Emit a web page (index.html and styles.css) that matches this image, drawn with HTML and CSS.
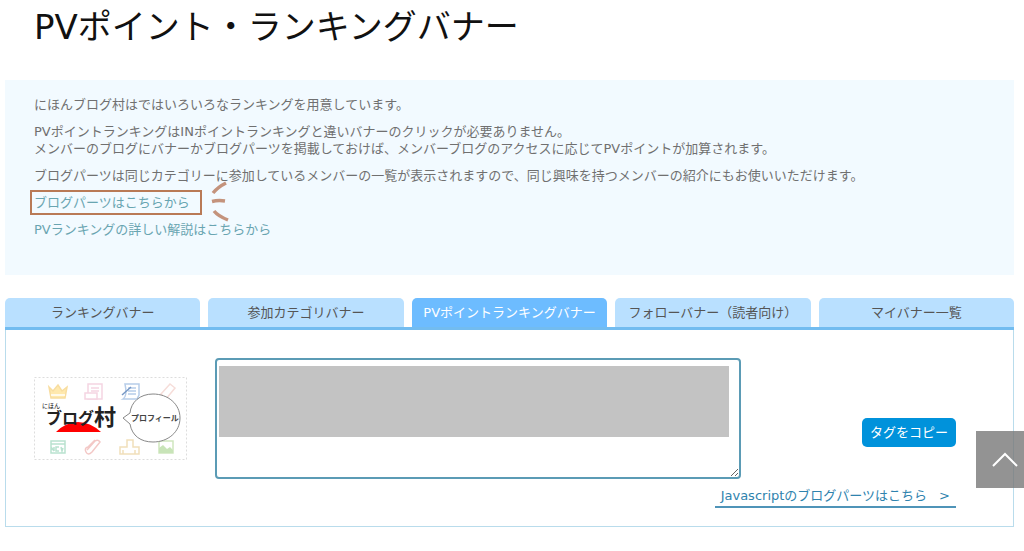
FILE: index.html
```
<!DOCTYPE html>
<html lang="ja">
<head>
    <meta charset="UTF-8">
    <meta name="viewport" content="width=device-width, initial-scale=1.0">
    <title>PVポイント・ランキングバナー</title>
    <link rel="stylesheet" href="styles.css">
</head>
<body>
    <main class="container">
        <h1>PVポイント・ランキングバナー</h1>

        <section class="intro">
            <p>にほんブログ村はではいろいろなランキングを用意しています。</p>
            <p>PVポイントランキングはINポイントランキングと違いバナーのクリックが必要ありません。<br>メンバーのブログにバナーかブログパーツを掲載しておけば、メンバーブログのアクセスに応じてPVポイントが加算されます。</p>
            <p>ブログパーツは同じカテゴリーに参加しているメンバーの一覧が表示されますので、同じ興味を持つメンバーの紹介にもお使いいただけます。</p>
            <p>
                <a class="marked" href="#parts">ブログパーツはこちらから
                    <svg class="rays" width="20" height="42" viewBox="0 0 20 42" fill="none" stroke="#c4937c" stroke-width="3.5" aria-hidden="true">
                        <path d="M3 12 Q8 6 16 2"/>
                        <path d="M2 20.5 Q8 19 15 20"/>
                        <path d="M4 30 Q8 35 18 39"/>
                    </svg>
                </a>
            </p>
            <p><a href="#about">PVランキングの詳しい解説はこちらから</a></p>
        </section>

        <nav class="tabs">
            <a href="#ranking">ランキングバナー</a>
            <a href="#category">参加カテゴリバナー</a>
            <a class="active" href="#pv">PVポイントランキングバナー</a>
            <a href="#follow">フォローバナー（読者向け）</a>
            <a href="#mybanner">マイバナー一覧</a>
        </nav>

        <section class="panel">
            <div class="banner-row">
                <svg class="banner" width="153" height="84" viewBox="0 0 153 84" role="img" aria-label="にほんブログ村 プロフィール">
                    <rect x="0.5" y="0.5" width="152" height="82" fill="#fff" stroke="#ddd" stroke-dasharray="2 2"/>
                    <g fill="none" stroke-width="1.5">
                        <path d="M15 10l4 4 5-6 4 6 5-4-2 11H17z" fill="#ffe9ae" stroke="#f8dda0"/>
                        <path d="M17 18h14" stroke="#fff"/>
                        <path d="M54 7h14v15H54zM57 11h8M57 14h8" stroke="#f5d5e2"/>
                        <path d="M51 16h12v6H51z" fill="#fff" stroke="#f5d5e2"/>
                        <path d="M91 7h14v11l-2 4H89c3-2 4-6 2-15zM94 11h8M94 14h8M94 17h8" stroke="#b7cde9"/>
                        <path d="M88 18l9-8" stroke="#7798c5"/>
                        <path d="M127 17l9-10 5 4-9 11z" stroke="#f6ddd9"/>
                        <path d="M17 64h14v12H17zM17 67h14M17 70v4M20 70v4M17 70l3 4M25 70h-3v4h3M27 70l1 4 1-3" stroke="#b9e2cf"/>
                        <path d="M53 73l8-9q3-2 5 1l-8 10q-4 4-6 0t2-5l7-7" stroke="#f3c8c6"/>
                        <path d="M86 70h7v-7h6v7h6v7H86zM89 73v4M101 73v4" stroke="#f1dfbb"/>
                        <path d="M125 64h14v12h-14z" stroke="#cfe6bf"/>
                        <path d="M125 76v-5l4-3 4 4 3-2 3 3v3z" fill="#c8e4b8" stroke="none"/>
                    </g>
                    <path d="M22 55Q32 45 44 45T67 55Z" fill="#f00"/>
                    <path d="M96 36l-7 5 7 6C98 59 107 65 119 65c15 0 27-10 27-24S134 17 119 17c-13 0-22 8-23 19z" fill="#fff" stroke="#888"/>
                    <text class="logo-small" x="8" y="31">にほん</text>
                    <text class="logo-main" x="12" y="47">ブログ</text>
                    <text class="logo-mura" x="60" y="48">村</text>
                    <text class="logo-profile" x="97" y="44">プロフィール</text>
                </svg>
                <textarea class="code" aria-label="バナータグ"></textarea>
                <button class="copy" type="button">タグをコピー</button>
            </div>
            <a class="more" href="#javascript">Javascriptのブログパーツはこちら<span>&gt;</span></a>
        </section>
    </main>

    <button class="page-top" type="button" aria-label="ページの先頭へ">
        <svg width="26" height="16" viewBox="0 0 26 16" fill="none" stroke="#fff" stroke-width="2">
            <path d="M1 14L13 2l12 12"/>
        </svg>
    </button>
</body>
</html>
```
FILE: styles.css
```
* {
    box-sizing: border-box;
}

body {
    margin: 0;
    background: #fff;
    color: #707070;
    font-family: "DejaVu Sans", "Noto Sans CJK JP", sans-serif;
    font-size: 13px;
    line-height: 17px;
}

a {
    color: #69a5b1;
    text-decoration: none;
}

.container {
    padding: 0 10px 0 5px;
}

h1 {
    margin: 0;
    padding: 5px 29px 31px;
    color: #111;
    font-size: 34px;
    font-weight: 400;
    line-height: 44px;
}

.intro {
    padding: 16px 29px 37px;
    background: #f2faff;
}

.intro p {
    margin: 0 0 10px;
}

.intro p:last-child {
    margin-bottom: 0;
}

.marked {
    display: inline-block;
    position: relative;
    padding-right: 8px;
    outline: 2px solid #b97a56;
    outline-offset: 2px;
}

.rays {
    position: absolute;
    top: -13px;
    right: -32px;
}

/* タブ */
.tabs {
    display: grid;
    grid-template-columns: repeat(5, 1fr);
    gap: 8px;
    margin-top: 23px;
    border-bottom: 3px solid #72bcf0;
}

.tabs a {
    padding: 6px 0;
    border-radius: 5px 5px 0 0;
    background: #b9e0ff;
    color: #555;
    text-align: center;
    white-space: nowrap;
}

.tabs .active {
    background: #6dbcff;
    color: #fff;
}

.panel {
    display: flex;
    flex-direction: column;
    align-items: flex-end;
    padding: 28px 57px 18px 28px;
    border: 1px solid #b9dcec;
    border-top: 0;
}

.banner-row {
    display: flex;
    align-items: center;
    align-self: stretch;
    gap: 28px;
}

.banner {
    flex: none;
}

.logo-small {
    font-size: 6px;
}

.logo-main {
    font-size: 16px;
    font-weight: 700;
    fill: #222;
}

.logo-mura {
    font-size: 22px;
    font-weight: 700;
    fill: #222;
}

.logo-profile {
    font-size: 8px;
    font-weight: 700;
    fill: #444;
}

.code {
    flex: 1;
    height: 121px;
    margin-right: 93px;
    border: 2px solid #5b9bb5;
    border-radius: 4px;
    background: linear-gradient(#c3c3c3, #c3c3c3) 2px 6px / calc(100% - 12px) 71px no-repeat #fff;
}

.copy {
    align-self: flex-end;
    margin-bottom: 32px;
    padding: 6px 8px;
    border: 0;
    border-radius: 5px;
    background: #0092db;
    color: #fff;
    font: inherit;
    white-space: nowrap;
}

.more {
    display: flex;
    gap: 12px;
    margin-top: 8px;
    padding: 0 6px 2px;
    border-bottom: 2px solid #4f94b8;
    color: #2f83ae;
}

.page-top {
    display: flex;
    justify-content: center;
    align-items: center;
    position: fixed;
    right: 0;
    bottom: 63px;
    width: 48px;
    height: 57px;
    padding: 0 0 0 10px;
    border: 0;
    background: rgba(120, 120, 120, 0.8);
}
```
